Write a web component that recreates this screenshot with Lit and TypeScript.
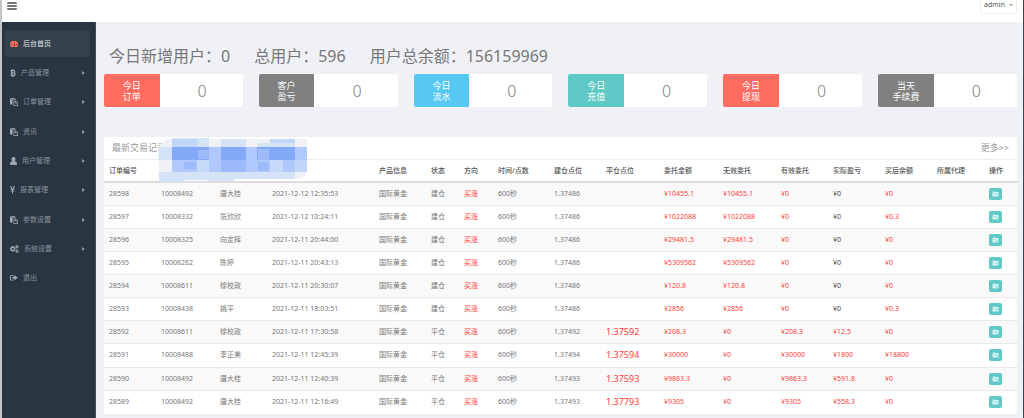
import { LitElement, html, css, svg } from "lit";
import { customElement } from "lit/decorators.js";
import { classMap } from "lit/directives/class-map.js";

const icons = {
  dashboard: svg`<path fill-rule="evenodd" d="M0 9a8 7.500 0 0 1 16 0c0 2-.5 3.500-1.500 5h-13C.5 12.500 0 11 0 9zM2 8h2v2H2zM7.200 2.500h1.600v2H7.200zM12 8h2v2h-2zM7 12.500h2.500L9.500 6 8 6z"/>`,
  bitcoin: svg`<path fill-rule="evenodd" d="M1 2h3V0h1.500v2H7V0h1.500v2.300C11 3 11.500 6.500 9.500 7.600c3 1 2.500 5.400-1 6.100V16H7v-2H5.500v2H4v-2H1v-2h1V4H1zM5 4v3h2c2 0 2-3 0-3zM5 9v3h2.500c2 0 2-3 0-3z"/>`,
  paste: svg`<path fill-rule="evenodd" d="M0 1h3.500V0h4v1H11v3H7L5 6v7H0zM3 2v1h5V2zM7 5.500h5V9h4v7H7zM13 5.500 16 8h-3zM8.500 7v7.500h6v-4h-4V7z"/>`,
  user: svg`<path d="M7 0c5 0 5 7 2 8.500 3 .5 5 2 5 4.500 0 2-1 3-2.500 3h-9C1 16 0 15 0 13c0-2.500 2-4 5-4.500C2 7 2 0 7 0z"/>`,
  yen: svg`<path d="M0 0h2.500L5 5.500 7.500 0H10L7 6.500h2V8H6v1.500h3V11H6v4H4v-4H1V9.500h3V8H1V6.500h2z"/>`,
  cogs: svg`<path fill-rule="evenodd" d="M4.500 2h2l.4 1.600 1.600-.8 1.400 1.400-.8 1.500L11 6.500v2.400l-1.800.5.8 1.600-1.500 1.400-1.500-.8-.5 1.900h-2L4 11.700l-1.600.8L1 11l.8-1.600L0 9V6.500l1.800-.6L1 4.300l1.400-1.500 1.600.8zM3.500 6v3.500h4V6zM13.500 0h1.200v1.200L16.500 2l1 2-1 1.500-1.800.8v1h-1.500l-.5-1-1.700-.8V2l1.500-.8zM13 3v1.800h2V3zM13.500 9h1.200v1l1.800.8 1 2-1 1.500-1.800.8v.9h-1.500l-.5-1-1.700-.8v-3.400l1.500-.8zM13 12v1.800h2V12z"/>`,
  exit: svg`<path fill-rule="evenodd" d="M3 2h4v1.500H3Q2 3.500 2 4.500v6q0 1 1 1h4V13H3q-3 0-3-3V5q0-3 3-3zM5 5.500h4V2l6.500 5.500L9 13V9.500H5z"/>`,
};

const menu = [
  { icon: icons.dashboard, w: 16, label: "后台首页", active: true },
  { icon: icons.bitcoin, w: 12, label: "产品管理", sub: true },
  { icon: icons.paste, w: 16, label: "订单管理", sub: true },
  { icon: icons.paste, w: 16, label: "资讯", sub: true },
  { icon: icons.user, w: 14, label: "用户管理", sub: true },
  { icon: icons.yen, w: 10, label: "报表管理", sub: true },
  { icon: icons.paste, w: 16, label: "参数设置", sub: true },
  { icon: icons.cogs, w: 18, label: "系统设置", sub: true },
  { icon: icons.exit, w: 16, label: "退出" },
];

const cards = [
  ["今日", "订单", "red"],
  ["客户", "盈亏", "gray"],
  ["今日", "流水", "blue"],
  ["今日", "充值", "teal"],
  ["今日", "提现", "red"],
  ["当天", "手续费", "gray"],
];

const columns: [string, number][] = [
  ["订单编号", 52], ["", 59], ["", 52], ["", 107], ["产品信息", 52], ["状态", 33],
  ["方向", 34], ["时间/点数", 56], ["建仓点位", 52], ["平仓点位", 58], ["委托金额", 59],
  ["无效委托", 58], ["有效委托", 52], ["实际盈亏", 52], ["买后余额", 52], ["所属代理", 52], ["操作", 34],
];

const orders = [
  ["28598", "10008492", "唐大桂", "2021-12-12 12:35:53", "1.37486", "", "10455.1", "10455.1", "0", "0", "0"],
  ["28597", "10008332", "张欣欣", "2021-12-12 10:24:11", "1.37486", "", "1022088", "1022088", "0", "0", "0.3"],
  ["28596", "10008325", "向定辉", "2021-12-11 20:44:00", "1.37486", "", "29481.5", "29481.5", "0", "0", "0"],
  ["28595", "10008262", "陈婷", "2021-12-11 20:43:13", "1.37486", "", "5309562", "5309562", "0", "0", "0"],
  ["28594", "10008611", "徐校政", "2021-12-11 20:30:07", "1.37486", "", "120.8", "120.8", "0", "0", "0"],
  ["28593", "10008438", "姚平", "2021-12-11 18:03:51", "1.37486", "", "2856", "2856", "0", "0", "0.3"],
  ["28592", "10008611", "徐校政", "2021-12-11 17:30:58", "1.37492", "1.37592", "208.3", "0", "208.3", "12.5", "0"],
  ["28591", "10008488", "李正美", "2021-12-11 12:45:39", "1.37494", "1.37594", "30000", "0", "30000", "1800", "18800"],
  ["28590", "10008492", "唐大桂", "2021-12-11 12:40:39", "1.37493", "1.37593", "9863.3", "0", "9863.3", "591.8", "0"],
  ["28589", "10008492", "唐大桂", "2021-12-11 12:16:49", "1.37493", "1.37793", "9305", "0", "9305", "558.3", "0"],
];

@customElement("app-root")
export class AppRoot extends LitElement {
  static styles = css`
    :host {
      display: flex;
      flex-direction: column;
      min-height: 100vh;
      box-sizing: border-box;
      border-left: 2px solid #c4c6ca;
      border-right: 1px solid #3a4450;
      background: #f0f1f7;
      color: #777;
      font: 7px/10px "Noto Sans", "Noto Sans CJK SC", sans-serif;
    }
    * { box-sizing: border-box; }
    button { font: inherit; color: inherit; border: 0; padding: 0; background: none; cursor: pointer; }
    a { color: inherit; text-decoration: none; }
    .top { display: flex; justify-content: space-between; align-items: flex-start; height: 22px; background: #fff; }
    .burger { display: grid; gap: 1px; margin: 2px 0 0 5px; width: 10px; }
    .burger i { height: 2px; background: #777; border-radius: 1px; }
    .account {
      display: flex; align-items: center; gap: 4px; height: 14px; padding: 0 3px 4px;
      margin-right: 6px; border: 1px solid #eee; border-top: 0; border-radius: 0 0 3px 3px;
      color: #555;
    }
    .caret { border: 2px solid transparent; border-top-color: #999; border-bottom: 0; }
    .body { display: flex; flex: 1; }
    .side { width: 94px; flex: none; background: #2a3542; padding: 8px 5px 0 3px; border-right: 1px solid #454c5a; }
    .menu { display: grid; grid-auto-rows: 1fr; height: 264px; margin: 0; padding: 0; list-style: none; }
    .link { display: flex; align-items: center; height: 27px; gap: 5px; padding: 0 5px; color: #8b949e; border-radius: 2px; }
    .link.active { background: #35404d; color: #dfe2e6; }
    .link svg { height: 8px; fill: #a3a9b0; }
    .link.active svg { fill: #ff6c60; }
    .arrow { margin-left: auto; border: 2px solid transparent; border-left: 3px solid #8b949e; border-right: 0; }
    .main { flex: 1; min-width: 0; padding: 22px 6px 4px 8px; }
    .totals { display: flex; gap: 24px; margin: 0; padding: 0 5px; font-size: 16px; line-height: 24px; }
    .cards { display: grid; grid-template-columns: repeat(6, 1fr); gap: 16px; margin-top: 6px; }
    .card { display: flex; height: 33px; background: #fff; border-radius: 2px; overflow: hidden; }
    .tag {
      display: grid; place-content: center; text-align: center; width: 40%;
      color: #fff; font-size: 9px; line-height: 11px;
    }
    .red { background: #ff6c60; }
    .gray { background: #808080; }
    .blue { background: #57c8f2; }
    .teal { background: #5fcac5; }
    .value { flex: 1; display: grid; place-content: center; padding-left: 2px; font-size: 16px; line-height: 24px; font-weight: 300; color: #808080; }
    .panel { position: relative; margin-top: 30px; background: #fff; border-radius: 2px; }
    .head { display: flex; justify-content: space-between; align-items: center; height: 23px; padding: 0 8px; font-size: 9px; color: #999; border-bottom: 1px solid #eee; }
    .title { margin: 0; font: inherit; }
    .redacted { position: absolute; left: 52px; top: 0; width: 153px; height: 46px; }
    table { width: 100%; table-layout: fixed; border-collapse: collapse; }
    th, td { text-align: left; padding: 0 0 0 5px; white-space: nowrap; }
    th { height: 22px; color: #555; font-weight: 500; border-bottom: 2px solid #ddd; }
    td { height: 23px; border-bottom: 1px solid #e9e9eb; }
    tbody tr:nth-child(odd) { background: #f9f9f9; }
    .settled:nth-child(even) td { height: 24px; }
    tbody tr:last-child td { border: 0; }
    .up { color: #ff3b3b; }
    .flat { color: #444; }
    .close { color: #ff3b3b; font-size: 9px; }
    .view { display: grid; place-content: center; width: 13px; height: 12px; background: #5fcac5; border-radius: 2px; }
    .view svg { display: block; width: 7px; height: 6px; }
  `;

  render() {
    return html`
      <header class="top">
        <button class="burger" aria-label="菜单"><i></i><i></i><i></i></button>
        <button class="account">admin<span class="caret"></span></button>
      </header>
      <div class="body">
        <nav class="side">
          <ul class="menu">
            ${menu.map((m) => html`<li>
              <a href="#" class=${classMap({ link: true, active: !!m.active })}>
                <svg viewBox="0 0 ${m.w} 16" aria-hidden="true">${m.icon}</svg>
                <span>${m.label}</span>
                ${m.sub ? html`<span class="arrow"></span>` : ""}
              </a>
            </li>`)}
          </ul>
        </nav>
        <main class="main">
          <p class="totals"><span>今日新增用户：0</span><span>总用户：596</span><span>用户总余额：156159969</span></p>
          <section class="cards">
            ${cards.map(([a, b, tone]) => html`<div class="card">
              <div class="tag ${tone}"><span>${a}</span><span>${b}</span></div>
              <div class="value">0</div>
            </div>`)}
          </section>
          <section class="panel">
            <div class="head"><h2 class="title">最新交易记录</h2><a href="#">更多&gt;&gt;</a></div>
            <table>
              <colgroup>${columns.map(([, w]) => html`<col style="width:${w}px">`)}</colgroup>
              <thead><tr>${columns.map(([name]) => html`<th>${name}</th>`)}</tr></thead>
              <tbody>${orders.map((o) => this.row(o))}</tbody>
            </table>
            ${this.mask()}
          </section>
        </main>
      </div>
    `;
  }

  row([id, uid, name, time, open, close, stake, invalid, valid, profit, balance]: string[]) {
    return html`<tr class=${classMap({ settled: !!close })}>
      <td>${id}</td><td>${uid}</td><td>${name}</td><td>${time}</td>
      <td>国际黄金</td><td>${close ? "平仓" : "建仓"}</td><td class="up">买涨</td><td>600秒</td>
      <td>${open}</td><td class="close">${close}</td>
      <td class="up">¥${stake}</td><td class="up">¥${invalid}</td><td class="up">¥${valid}</td>
      <td class=${profit === "0" ? "flat" : "up"}>¥${profit}</td><td class="up">¥${balance}</td><td></td>
      <td><button class="view" aria-label="查看">
        <svg viewBox="0 0 14 12"><path fill="#d8f5f4" fill-rule="evenodd" d="M2 1h4v1h7v9H1V3h1zM3 4v1h5V4zM8 7v1.500h4V7z"/></svg>
      </button></td>
    </tr>`;
  }

  mask() {
    return html`<svg class="redacted" viewBox="0 0 153 46" aria-hidden="true">
      <path fill="#eff1f7" d="M12 2h139v31q0 8-9 9H3V30Q-1 6 12 2z"/>
      <path fill="#d5e3f7" d="M3 10h13V1h37v9h12V2h25v8h12V6h12V2h25v8h12v25h-12v7H78v2H53v-1H28v2H3V35h13V23H3z"/>
      <path fill="#c2d6f9" d="M16 2h25v8H16zM114 2h25v4h-25zM139 23h12v12h-12z"/>
      <path fill="#b0c8fb" d="M16 10h135v13h-12v12H16z"/>
      <path fill="#c8dafa" d="M41 23h12v12H41zM114 23h13v12h-13z"/>
      <path fill="#9dbbfa" d="M65 23h25v12H65zM28 25h12v7H28zM102 25h11v9h-11z"/>
      <path fill="#84a9f8" d="M16 10h37v13H16zM65 10h25v13H65zM101 10h38v13h-38z"/>
      <path fill="#9dbbfa" d="M42 13h11v9H42zM102 12h11v11h-11z"/>
    </svg>`;
  }
}
